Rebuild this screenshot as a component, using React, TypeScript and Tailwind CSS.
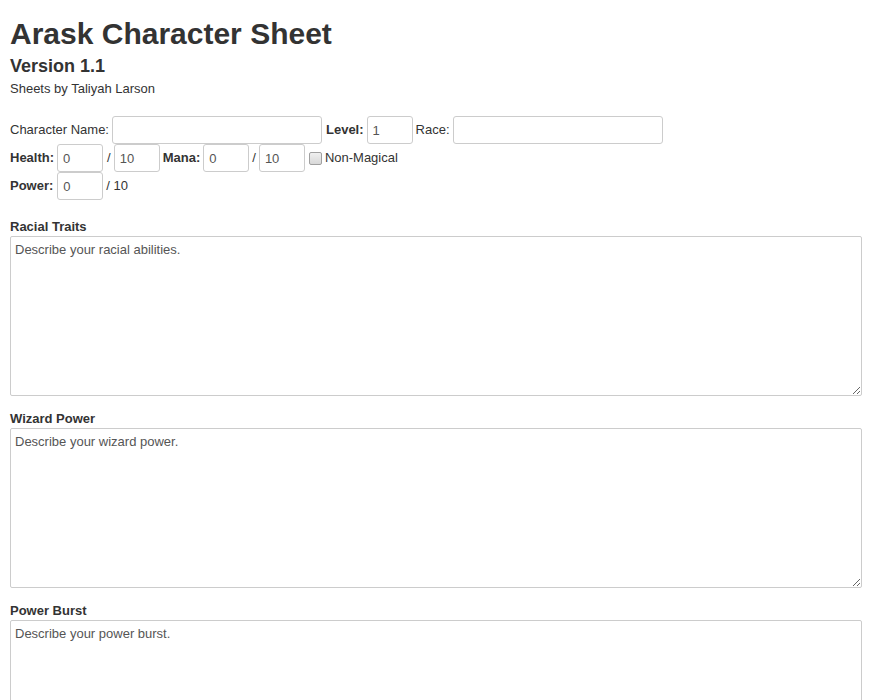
import React from "react";

function SmallInput({ value }: { value: string }) {
  return (
    <input
      type="text"
      defaultValue={value}
      className="h-[28px] w-[46px] rounded-[3px] border border-[#cccccc] bg-white px-[5px] text-[13px] text-[#555555] outline-none"
    />
  );
}

function Section({ title, placeholder, first }: { title: string; placeholder: string; first?: boolean }) {
  return (
    <div className={first ? "mt-[18px]" : "mt-[14px]"}>
      <div className="text-[13px] font-bold leading-[18px]">{title}</div>
      <textarea
        defaultValue={placeholder}
        className="block h-[160px] w-full rounded-[2px] border border-[#cccccc] bg-white px-[4px] py-[4px] text-[13px] leading-[18px] text-[#555555] outline-none"
      />
    </div>
  );
}

export default function App() {
  return (
    <div
      className="bg-white px-[10px] pb-[20px] text-[#333333]"
      style={{ fontFamily: '"Liberation Sans", Arial, sans-serif' }}
    >
      <h1 className="pt-[17px] text-[30px] font-bold leading-[33px]">Arask Character Sheet</h1>
      <h2 className="mt-[6px] text-[18px] font-bold leading-[20px]">Version 1.1</h2>
      <div className="mt-[4px] text-[13px] leading-[18px]">Sheets by Taliyah Larson</div>

      <div className="mt-[18px] text-[13px]">
        <div className="flex h-[28px] items-center">
          <span>Character Name:</span>
          <input
            type="text"
            className="ml-[3px] h-[28px] w-[210px] rounded-[3px] border border-[#cccccc] bg-white px-[5px] text-[13px] text-[#555555] outline-none"
          />
          <span className="ml-[4px] font-bold">Level:</span>
          <span className="ml-[3px]"><SmallInput value="1" /></span>
          <span className="ml-[3px]">Race:</span>
          <input
            type="text"
            className="ml-[3px] h-[28px] w-[210px] rounded-[3px] border border-[#cccccc] bg-white px-[5px] text-[13px] text-[#555555] outline-none"
          />
        </div>
        <div className="flex h-[28px] items-center">
          <span className="font-bold">Health:</span>
          <span className="ml-[3px]"><SmallInput value="0" /></span>
          <span className="ml-[4px]">/</span>
          <span className="ml-[3px]"><SmallInput value="10" /></span>
          <span className="ml-[3px] font-bold">Mana:</span>
          <span className="ml-[3px]"><SmallInput value="0" /></span>
          <span className="ml-[3px]">/</span>
          <span className="ml-[3px]"><SmallInput value="10" /></span>
          <span className="ml-[4px] inline-block h-[13px] w-[13px] rounded-[2px] border border-[#a0a0a0] bg-gradient-to-b from-[#f0f0f0] to-[#d8d8d8]" />
          <span className="ml-[3px]">Non-Magical</span>
        </div>
        <div className="flex h-[28px] items-center">
          <span className="font-bold">Power:</span>
          <span className="ml-[4px]"><SmallInput value="0" /></span>
          <span className="ml-[3px]">/ 10</span>
        </div>
      </div>

      <Section first title="Racial Traits" placeholder="Describe your racial abilities." />
      <Section title="Wizard Power" placeholder="Describe your wizard power." />
      <Section title="Power Burst" placeholder="Describe your power burst." />
    </div>
  );
}
